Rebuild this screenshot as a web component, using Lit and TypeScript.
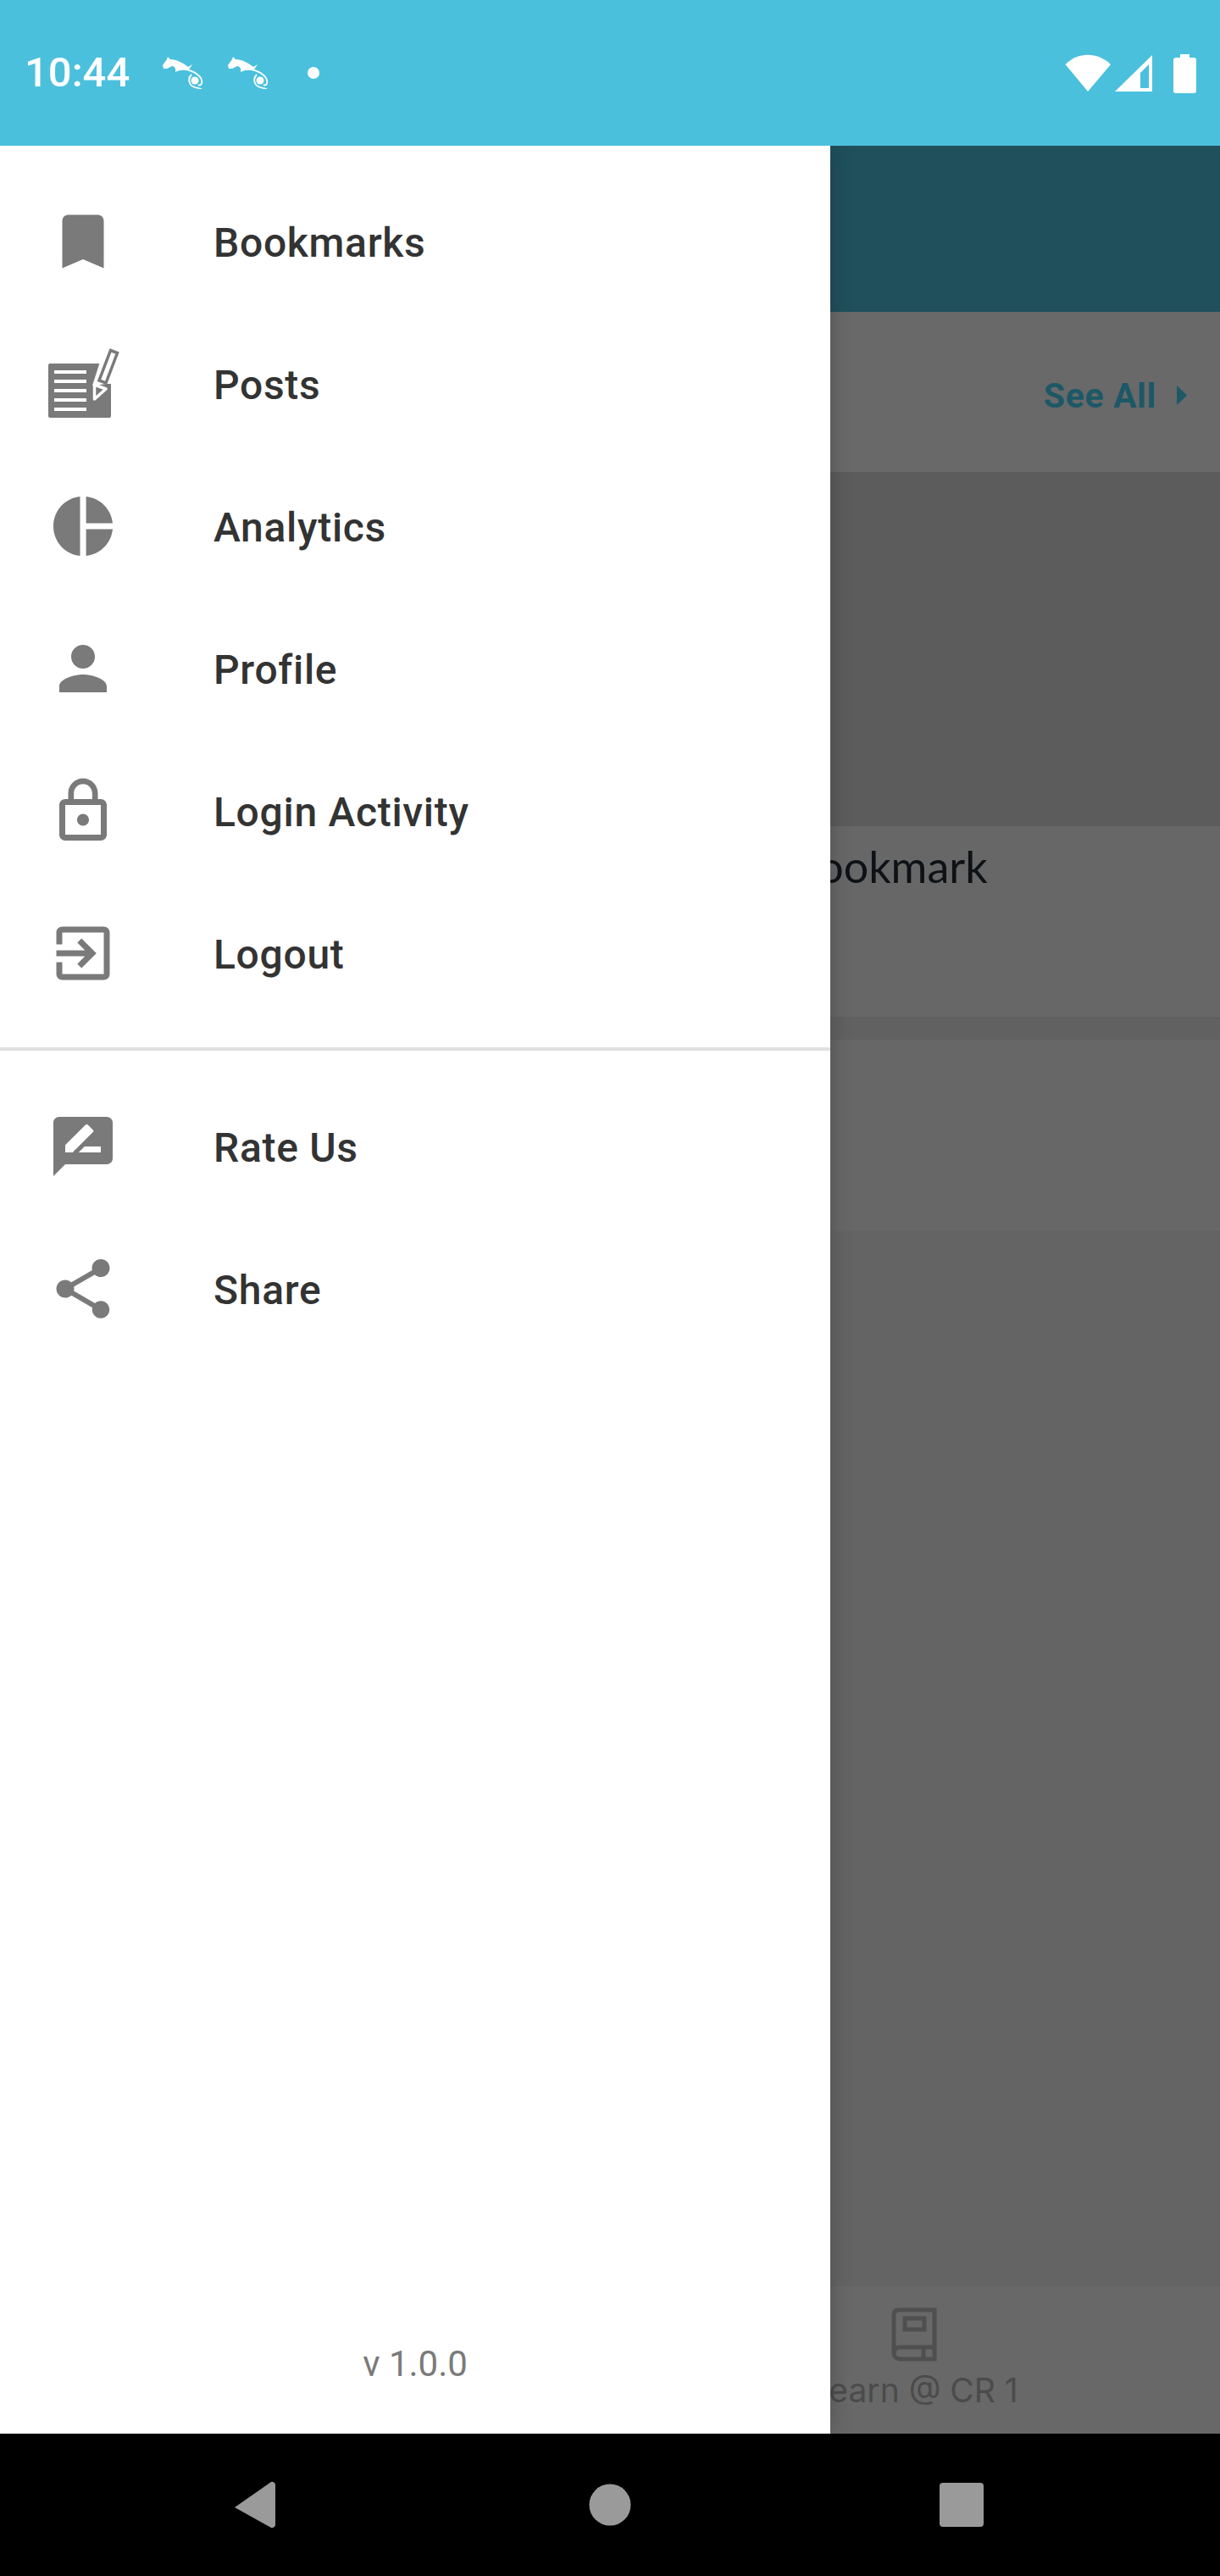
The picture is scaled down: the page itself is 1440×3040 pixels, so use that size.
import { LitElement, html, css, svg } from 'lit';
import { customElement } from 'lit/decorators.js';

// material glyphs, 24 unit grid
const glyph = (d: string) => svg`<path d=${d}></path>`;

// posts icon is not a stock glyph, drawn on the 84px box
const postsIcon = svg`
  <path d="M3 18h70a2 2 0 0 1 2 2v60a2 2 0 0 1-2 2H3a2 2 0 0 1-2-2V20a2 2 0 0 1 2-2z"></path>
  <path class="cut" d="M8 26h38v4H8zM8 37h38v4H8zM8 48h38v4H8zM8 59h38v4H8zM8 70h38v4H8z"></path>
  <path class="cut" d="M62 16H76V42H70L53 44z"></path>
  <path class="pen" d="M74.5 2.5L82.5 5.5L69 41L61 38z"></path>
  <path class="pen-tip" d="M55.5 43L55.5 60L69 48z"></path>
`;

const menuTop = [
  { label: 'Bookmarks', icon: glyph('M17 3H7c-1.1 0-2 .9-2 2v16l7-3 7 3V5c0-1.1-.9-2-2-2z') },
  { label: 'Posts', custom: postsIcon },
  { label: 'Analytics', icon: glyph('M11 2v20c-5.07-.5-9-4.79-9-10s3.93-9.5 9-10zm2.03 0v8.99H22c-.47-4.74-4.24-8.52-8.97-8.99zm0 11.01V22c4.74-.47 8.5-4.25 8.97-8.99h-8.97z') },
  { label: 'Profile', icon: glyph('M12 12c2.21 0 4-1.79 4-4s-1.79-4-4-4-4 1.79-4 4 1.79 4 4 4zm0 2c-2.67 0-8 1.34-8 4v2h16v-2c0-2.66-5.33-4-8-4z') },
  { label: 'Login Activity', icon: glyph('M12 17c1.1 0 2-.9 2-2s-.9-2-2-2-2 .9-2 2 .9 2 2 2zm6-9h-1V6c0-2.76-2.24-5-5-5S7 3.24 7 6v2H6c-1.1 0-2 .9-2 2v10c0 1.1.9 2 2 2h12c1.1 0 2-.9 2-2V10c0-1.1-.9-2-2-2zM8.9 6c0-1.71 1.39-3.1 3.1-3.1s3.1 1.39 3.1 3.1v2H8.9V6zM18 20H6V10h12v10z') },
  { label: 'Logout', icon: glyph('M10.09 15.59L11.5 17l5-5-5-5-1.41 1.41L12.67 11H3v2h9.67l-2.58 2.59zM19 3H5c-1.11 0-2 .9-2 2v4h2V5h14v14H5v-4H3v4c0 1.1.89 2 2 2h14c1.1 0 2-.9 2-2V5c0-1.1-.9-2-2-2z') },
];

const menuBottom = [
  { label: 'Rate Us', icon: glyph('M20 2H4c-1.1 0-2 .9-2 2v18l4-4h14c1.1 0 2-.9 2-2V4c0-1.1-.9-2-2-2zM6 14v-2.47l6.88-6.88c.2-.2.51-.2.71 0l1.77 1.77c.2.2.2.51 0 .71L8.47 14H6zm12 0h-7.5l2-2H18v2z') },
  { label: 'Share', icon: glyph('M18 16.08c-.76 0-1.44.3-1.96.77L8.91 12.7c.05-.23.09-.46.09-.7s-.04-.47-.09-.7l7.05-4.11c.54.5 1.25.81 2.04.81 1.66 0 3-1.34 3-3s-1.34-3-3-3-3 1.34-3 3c0 .24.04.47.09.7L8.04 9.81C7.5 9.31 6.79 9 6 9c-1.66 0-3 1.34-3 3s1.34 3 3 3c.79 0 1.5-.31 2.04-.81l7.12 4.16c-.05.21-.08.43-.08.65 0 1.61 1.31 2.92 2.92 2.92 1.61 0 2.92-1.31 2.92-2.92s-1.31-2.92-2.92-2.92z') },
];

type MenuItem = { label: string; icon?: unknown; custom?: unknown };

@customElement('app-root')
export class AppRoot extends LitElement {
  static override styles = css`
    :host {
      display: block;
      width: 1440px;
      height: 3040px;
      font-family: Roboto, 'Liberation Sans', sans-serif;
    }

    .screen {
      display: flex;
      flex-direction: column;
      height: 3040px;
      overflow: hidden;
    }

    /* status bar */
    .status {
      flex: none;
      height: 172px;
      background: #4bc0dd;
      display: flex;
      align-items: center;
      padding: 0 28px 0 29px;
      color: #fff;
    }
    .time {
      font-size: 49px;
      font-weight: 500;
      line-height: 56px;
      margin-right: 39px;
    }
    .notif {
      width: 48px;
      height: 38px;
      margin-right: 29px;
      fill: #fff;
    }
    .notif path.line {
      fill: none;
      stroke: #fff;
      stroke-width: 1.8;
    }
    .dot {
      width: 14px;
      height: 14px;
      border-radius: 50%;
      background: #fff;
      margin-left: 17px;
    }
    .sys {
      margin-left: auto;
      width: 156px;
      height: 48px;
      fill: #fff;
    }
    .sys .hole {
      fill: #4bc0dd;
    }

    /* dimmed page behind the drawer */
    .body {
      flex: 1;
      position: relative;
      overflow: hidden;
      display: flex;
      flex-direction: column;
      background: #646464;
    }
    .toolbar {
      flex: none;
      height: 196px;
      background: #1f505c;
    }
    .section {
      flex: none;
      height: 189px;
      box-sizing: border-box;
      padding: 8px 39px 0 0;
      background: #696969;
      display: flex;
      align-items: center;
      justify-content: flex-end;
      gap: 24px;
      color: #1c5866;
      font-size: 41px;
      font-weight: 700;
      letter-spacing: 0.6px;
    }
    .section svg {
      width: 12px;
      height: 23px;
      fill: #1c5866;
    }
    .thumb {
      flex: none;
      height: 418px;
      background: #5c5c5c;
    }
    .card {
      flex: none;
      height: 225px;
      background: #676767;
      box-sizing: border-box;
      padding: 11px 0 0 933px;
    }
    .card-title {
      font-family: Lato, 'Open Sans', sans-serif;
      font-size: 52px;
      line-height: 72px;
      color: #0e1216;
    }
    .gap {
      flex: none;
      height: 27px;
      background: #616161;
    }
    .fill {
      flex: 1;
    }
    .tabs {
      flex: none;
      height: 174px;
      background: #686868;
      display: flex;
      flex-direction: column;
      align-items: center;
      box-sizing: border-box;
      padding: 25px 0 0 718px;
      color: #4b4b4b;
      font-family: Inter, Roboto, sans-serif;
      font-size: 39px;
    }
    .tabs svg {
      width: 54px;
      height: 64px;
      fill: none;
      stroke: #4f4f4f;
      stroke-width: 5;
    }
    .tab-label {
      line-height: 48px;
      margin-top: 10px;
    }

    /* drawer */
    .drawer {
      position: absolute;
      left: 0;
      top: 0;
      bottom: 0;
      width: 980px;
      background: #fff;
      box-shadow: 0 0 24px rgba(0, 0, 0, 0.22);
      display: flex;
      flex-direction: column;
      padding-top: 29px;
      box-sizing: border-box;
    }
    .row {
      flex: none;
      height: 168px;
      display: flex;
      align-items: center;
      padding-left: 56px;
      color: #333;
      font-size: 48px;
      font-weight: 500;
      letter-spacing: 0.7px;
    }
    .row span {
      padding-top: 2px;
    }
    .row svg {
      flex: none;
      width: 84px;
      height: 84px;
      margin-right: 112px;
      fill: #7a7a7a;
      overflow: visible;
    }
    .row .cut {
      fill: #fff;
    }
    .row .pen {
      fill: #fff;
      stroke: #7a7a7a;
      stroke-width: 3.5;
    }
    .row .pen-tip {
      fill: #7a7a7a;
      stroke: #fff;
      stroke-width: 3.5;
      stroke-linejoin: round;
    }
    .rule {
      flex: none;
      height: 4px;
      background: #e0e0e0;
      margin: 27px 0 29px;
    }
    .version {
      margin-top: auto;
      padding-bottom: 58px;
      text-align: center;
      color: #7a7a7a;
      font-size: 42px;
      line-height: 48px;
    }

    /* android nav */
    .nav {
      flex: none;
      height: 168px;
      background: #000;
    }
    .nav svg {
      display: block;
      width: 1440px;
      height: 168px;
      fill: #9a9a9a;
    }
  `;

  private renderRow(item: MenuItem) {
    return html`<div class="row">
      ${item.custom
        ? html`<svg viewBox="0 0 84 84">${item.custom}</svg>`
        : html`<svg viewBox="0 0 24 24">${item.icon}</svg>`}
      <span>${item.label}</span>
    </div>`;
  }

  // app logo used as the notification icon
  private renderHorse() {
    return html`<svg class="notif" viewBox="0 0 48 38">
      <path d="M0 10L5 3L6 0L9 3C16 3 24 7 30 12L35 9L31 15C25 14 20 15 15 18C16 14 14 11 11 11L5 14L1 14z"></path>
      <path class="line" d="M17 16C27 13 39 17 45 25C48 31 45 35 42 33"></path>
      <path class="line" d="M34 21C29 26 31 34 38 36L46 38"></path>
      <circle cx="38" cy="28" r="4.5"></circle>
    </svg>`;
  }

  override render() {
    return html`
      <div class="screen">
        <header class="status">
          <span class="time">10:44</span>
          ${this.renderHorse()} ${this.renderHorse()}
          <span class="dot"></span>
          <svg class="sys" viewBox="0 0 156 48">
            <path d="M28 46L1.5 14C17 -1 39 -1 55 14z"></path>
            <path d="M60 46L104 3V46z"></path>
            <path class="hole" d="M90 24L100 14V42H90z"></path>
            <path d="M137 2h11v4h5a3 3 0 0 1 3 3v36a3 3 0 0 1-3 3h-21a3 3 0 0 1-3-3V9a3 3 0 0 1 3-3h5z"></path>
          </svg>
        </header>

        <div class="body">
          <div class="toolbar"></div>
          <div class="section">
            <span>See All</span>
            <svg viewBox="0 0 12 23"><path d="M0 0L12 11.5L0 23z"></path></svg>
          </div>
          <div class="thumb"></div>
          <div class="card"><span class="card-title">Bookmark</span></div>
          <div class="gap"></div>
          <div class="card"></div>
          <div class="fill"></div>
          <div class="tabs">
            <svg viewBox="0 0 54 64">
              <path d="M9 3H51V61H11C6 61 3 58 3 54V9C3 5 5 3 9 3z"></path>
              <path d="M3 54C3 49 6 47 11 47H51M38 47V61"></path>
              <rect x="16" y="13" width="23" height="13"></rect>
            </svg>
            <span class="tab-label">Learn @ CR 1</span>
          </div>

          <nav class="drawer">
            ${menuTop.map((item) => this.renderRow(item))}
            <div class="rule"></div>
            ${menuBottom.map((item) => this.renderRow(item))}
            <div class="version">v 1.0.0</div>
          </nav>
        </div>

        <footer class="nav">
          <svg viewBox="0 0 1440 168">
            <path d="M277 87L320 57a4 4 0 0 1 5 3V108a4 4 0 0 1-5 3z"></path>
            <circle cx="720" cy="84" r="24.5"></circle>
            <rect x="1109" y="58" width="52" height="52" rx="4"></rect>
          </svg>
        </footer>
      </div>
    `;
  }
}
